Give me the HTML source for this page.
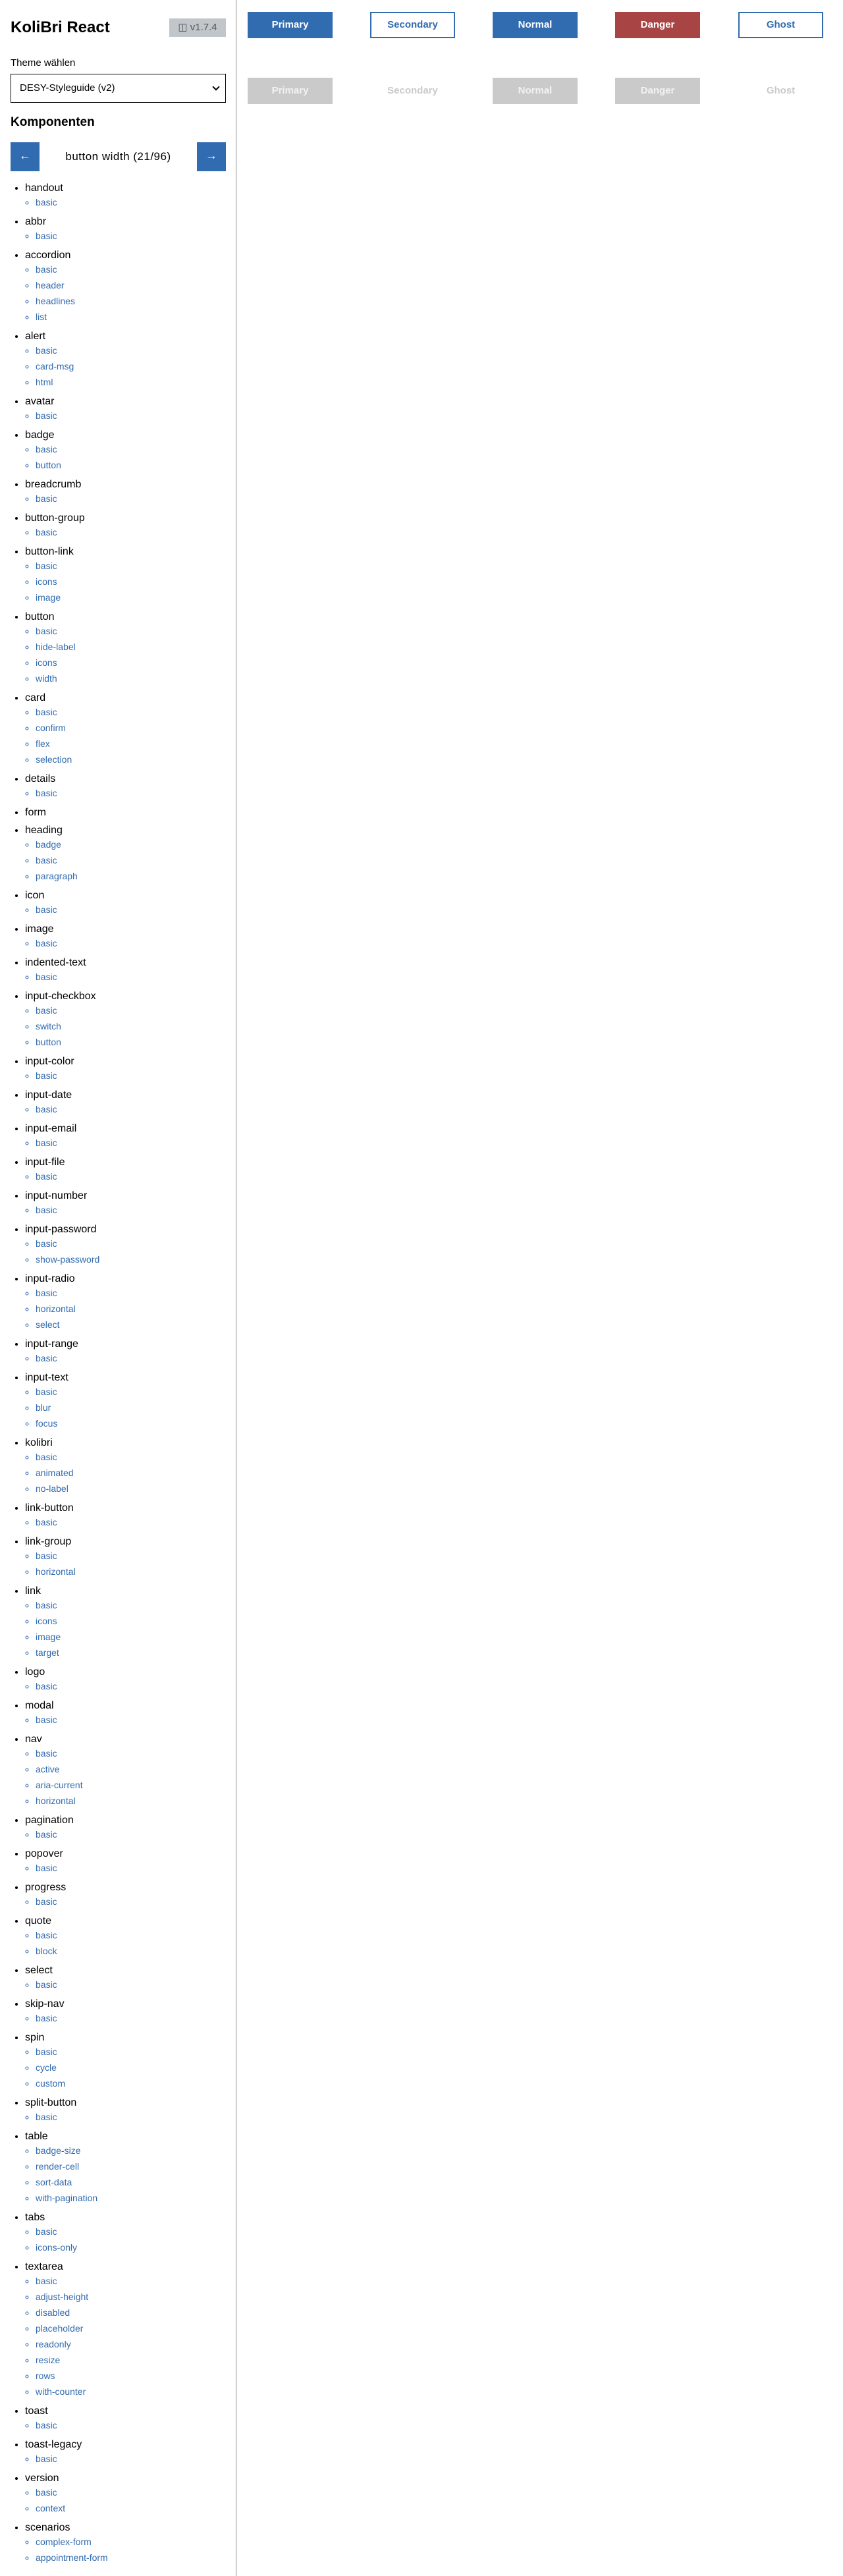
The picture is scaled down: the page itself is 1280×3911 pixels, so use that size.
<!DOCTYPE html>
<html><head><meta charset="utf-8"><style>
*{box-sizing:border-box}
body{margin:0;width:1280px;height:3911px;font-family:"Liberation Sans",sans-serif;background:#fff;position:relative;overflow:hidden}
#side{position:absolute;left:0;top:0;width:359px;height:3911px;border-right:1px solid #8a8a8a}
h1{position:absolute;left:16px;top:27px;margin:0;font-size:24px;font-weight:bold;line-height:30px;color:#000}
.badge{position:absolute;left:257px;top:28px;width:86px;height:28px;background:#c0c6ca;color:#555;font-size:15px;line-height:28px;text-align:center}
.lbl{position:absolute;left:16px;top:86px;font-size:15px;line-height:20px}
.sel{position:absolute;left:16px;top:112px;width:327px;height:44px;border:1.5px solid #000;font-size:15px;line-height:41px;padding-left:13px}
.sel:after{content:"";position:absolute;right:10px;top:15px;width:6px;height:6px;border-right:2px solid #000;border-bottom:2px solid #000;transform:rotate(45deg)}
h2{position:absolute;left:16px;top:174px;margin:0;font-size:19px;font-weight:bold;line-height:24px}
.nb{position:absolute;top:216px;width:44px;height:44px;background:#316bb0;color:#fff;font-size:18px;line-height:40px;text-align:center}
.nt{position:absolute;left:60px;width:239px;top:226px;text-align:center;font-size:17px;line-height:24px;letter-spacing:.5px}
ul.top{position:absolute;left:0;top:277px;margin:0;padding:0 0 0 38px;list-style:disc}
ul.top>li{font-size:16px;line-height:18px;margin-bottom:9px;color:#000}
ul.top ul{margin:0;padding-left:16px;list-style:circle}
ul.top ul li{font-size:14px;line-height:24px;color:#316bb0}
.b{position:absolute;width:129px;height:40px;font-size:15px;font-weight:bold;text-align:center;line-height:40px}
.p{background:#316bb0;color:#fff}
.s{border:2px solid #316bb0;color:#316bb0;line-height:36px;background:#fff}
.d{background:#a84443;color:#fff}
.x{background:#cacaca;color:#f2f2f2}
.xt{color:#cacaca}
</style></head><body>
<div id="side">
<h1>KoliBri React</h1>
<div class="badge">◫ v1.7.4</div>
<div class="lbl">Theme wählen</div>
<div class="sel">DESY-Styleguide (v2)</div>
<h2>Komponenten</h2>
<div class="nb" style="left:16px">←</div>
<div class="nt">button width (21/96)</div>
<div class="nb" style="left:299px">→</div>
<ul class="top">
<li>handout<ul><li>basic</li></ul></li>
<li>abbr<ul><li>basic</li></ul></li>
<li>accordion<ul><li>basic</li><li>header</li><li>headlines</li><li>list</li></ul></li>
<li>alert<ul><li>basic</li><li>card-msg</li><li>html</li></ul></li>
<li>avatar<ul><li>basic</li></ul></li>
<li>badge<ul><li>basic</li><li>button</li></ul></li>
<li>breadcrumb<ul><li>basic</li></ul></li>
<li>button-group<ul><li>basic</li></ul></li>
<li>button-link<ul><li>basic</li><li>icons</li><li>image</li></ul></li>
<li>button<ul><li>basic</li><li>hide-label</li><li>icons</li><li>width</li></ul></li>
<li>card<ul><li>basic</li><li>confirm</li><li>flex</li><li>selection</li></ul></li>
<li>details<ul><li>basic</li></ul></li>
<li>form</li>
<li>heading<ul><li>badge</li><li>basic</li><li>paragraph</li></ul></li>
<li>icon<ul><li>basic</li></ul></li>
<li>image<ul><li>basic</li></ul></li>
<li>indented-text<ul><li>basic</li></ul></li>
<li>input-checkbox<ul><li>basic</li><li>switch</li><li>button</li></ul></li>
<li>input-color<ul><li>basic</li></ul></li>
<li>input-date<ul><li>basic</li></ul></li>
<li>input-email<ul><li>basic</li></ul></li>
<li>input-file<ul><li>basic</li></ul></li>
<li>input-number<ul><li>basic</li></ul></li>
<li>input-password<ul><li>basic</li><li>show-password</li></ul></li>
<li>input-radio<ul><li>basic</li><li>horizontal</li><li>select</li></ul></li>
<li>input-range<ul><li>basic</li></ul></li>
<li>input-text<ul><li>basic</li><li>blur</li><li>focus</li></ul></li>
<li>kolibri<ul><li>basic</li><li>animated</li><li>no-label</li></ul></li>
<li>link-button<ul><li>basic</li></ul></li>
<li>link-group<ul><li>basic</li><li>horizontal</li></ul></li>
<li>link<ul><li>basic</li><li>icons</li><li>image</li><li>target</li></ul></li>
<li>logo<ul><li>basic</li></ul></li>
<li>modal<ul><li>basic</li></ul></li>
<li>nav<ul><li>basic</li><li>active</li><li>aria-current</li><li>horizontal</li></ul></li>
<li>pagination<ul><li>basic</li></ul></li>
<li>popover<ul><li>basic</li></ul></li>
<li>progress<ul><li>basic</li></ul></li>
<li>quote<ul><li>basic</li><li>block</li></ul></li>
<li>select<ul><li>basic</li></ul></li>
<li>skip-nav<ul><li>basic</li></ul></li>
<li>spin<ul><li>basic</li><li>cycle</li><li>custom</li></ul></li>
<li>split-button<ul><li>basic</li></ul></li>
<li>table<ul><li>badge-size</li><li>render-cell</li><li>sort-data</li><li>with-pagination</li></ul></li>
<li>tabs<ul><li>basic</li><li>icons-only</li></ul></li>
<li>textarea<ul><li>basic</li><li>adjust-height</li><li>disabled</li><li>placeholder</li><li>readonly</li><li>resize</li><li>rows</li><li>with-counter</li></ul></li>
<li>toast<ul><li>basic</li></ul></li>
<li>toast-legacy<ul><li>basic</li></ul></li>
<li>version<ul><li>basic</li><li>context</li></ul></li>
<li>scenarios<ul><li>complex-form</li><li>appointment-form</li></ul></li>
</ul>
</div>
<div class="b p" style="left:376px;top:18px">Primary</div>
<div class="b s" style="left:562px;top:18px">Secondary</div>
<div class="b p" style="left:748px;top:18px">Normal</div>
<div class="b d" style="left:934px;top:18px">Danger</div>
<div class="b s" style="left:1121px;top:18px">Ghost</div>
<div class="b x" style="left:376px;top:118px">Primary</div>
<div class="b xt" style="left:562px;top:118px">Secondary</div>
<div class="b x" style="left:748px;top:118px">Normal</div>
<div class="b x" style="left:934px;top:118px">Danger</div>
<div class="b xt" style="left:1121px;top:118px">Ghost</div>
</body></html>
